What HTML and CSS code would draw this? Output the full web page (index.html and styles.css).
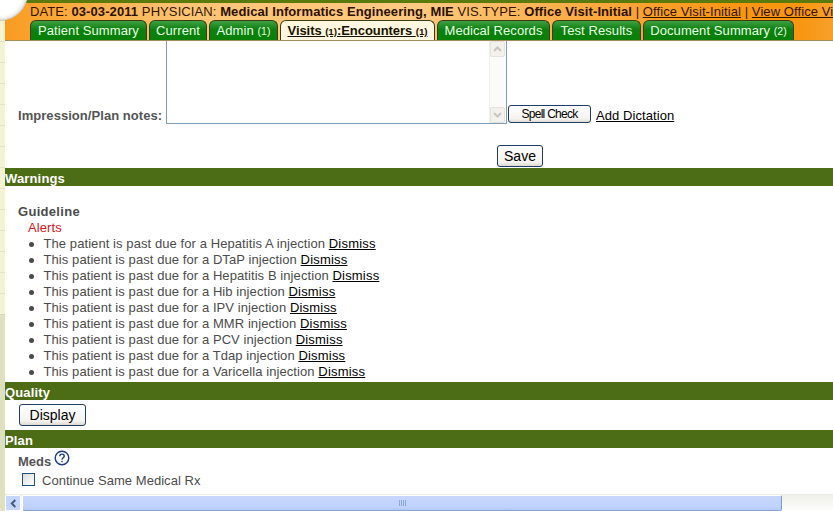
FILE: index.html
```html
<!DOCTYPE html>
<html lang="en">
<head>
<meta charset="utf-8">
<title>Encounter</title>
<link rel="stylesheet" href="styles.css">
</head>
<body>
<div class="app">
  <div class="rail"><div class="rail-lines"></div></div>
  <main class="main">
    <header class="header">
      <div class="visit">DATE: <b>03-03-2011</b> PHYSICIAN: <b>Medical Informatics Engineering, MIE</b> VIS.TYPE: <b>Office Visit-Initial</b> | <a>Office Visit-Initial</a> | <a>View Office Visit</a></div>
      <nav class="tabs">
        <a class="tab t1">Patient Summary</a>
        <a class="tab t2">Current</a>
        <a class="tab t3">Admin <small>(1)</small></a>
        <a class="tab t4 active"><span>Visits <small>(1)</small>:Encounters <small>(1)</small></span></a>
        <a class="tab t5">Medical Records</a>
        <a class="tab t6">Test Results</a>
        <a class="tab t7">Document Summary <small>(2)</small></a>
      </nav>
    </header>
    <section class="notes">
      <label class="notes-label">Impression/Plan notes:</label>
      <div class="textarea">
        <div class="vscroll">
          <span class="vbtn"><svg width="9" height="6" viewBox="0 0 9 6"><path d="M1 5L4.500 1.500L8 5"/></svg></span>
          <span class="vbtn"><svg width="9" height="6" viewBox="0 0 9 6"><path d="M1 1L4.500 4.500L8 1"/></svg></span>
        </div>
      </div>
      <button class="btn spell">Spell Check</button>
      <a class="link dictation">Add Dictation</a>
    </section>
    <div class="save-row"><button class="btn save">Save</button></div>
    <h2 class="bar">Warnings</h2>
    <section class="warnings">
      <h3>Guideline</h3>
      <div class="alerts">Alerts</div>
      <ul>
        <li>The patient is past due for a Hepatitis A injection <a class="link">Dismiss</a></li>
        <li>This patient is past due for a DTaP injection <a class="link">Dismiss</a></li>
        <li>This patient is past due for a Hepatitis B injection <a class="link">Dismiss</a></li>
        <li>This patient is past due for a Hib injection <a class="link">Dismiss</a></li>
        <li>This patient is past due for a IPV injection <a class="link">Dismiss</a></li>
        <li>This patient is past due for a MMR injection <a class="link">Dismiss</a></li>
        <li>This patient is past due for a PCV injection <a class="link">Dismiss</a></li>
        <li>This patient is past due for a Tdap injection <a class="link">Dismiss</a></li>
        <li>This patient is past due for a Varicella injection <a class="link">Dismiss</a></li>
      </ul>
    </section>
    <h2 class="bar">Quality</h2>
    <div class="quality"><button class="btn display">Display</button></div>
    <h2 class="bar">Plan</h2>
    <section class="plan">
      <div class="meds"><b>Meds</b>
        <svg class="help" width="16" height="16" viewBox="0 0 16 16"><circle cx="8" cy="8" r="6.800"/><path d="M5.800 6.300C5.800 3.400 10.300 3.500 10.300 6.100C10.300 7.800 8 7.800 8 9.700M8 10.800V12.300"/></svg>
      </div>
      <label class="check"><span class="box"></span>Continue Same Medical Rx</label>
    </section>
    <div class="hscroll">
      <span class="hbtn"><svg width="7" height="9" viewBox="0 0 7 9"><path d="M5.300 1L1.800 4.500L5.300 8"/></svg></span>
      <span class="thumb"><i></i><i></i><i></i><i></i></span>
    </div>
  </main>
  <div class="orb"></div>
</div>
</body>
</html>
```

FILE: styles.css
```css
* { box-sizing: border-box; }
body { margin: 0; background: #fff; font: 13px/16px "Liberation Sans", Arial, sans-serif; color: #4c4c4c; }
.app { position: relative; display: flex; width: 833px; height: 511px; overflow: hidden; }
.rail { width: 5px; flex: none; background: #dfe0bd; }
.rail-lines { height: 315px; background: repeating-linear-gradient(#f5f4d2 0 20px, #e4e3c4 20px 21px); border-bottom: 1px solid #d6d6b4; }
.orb { position: absolute; left: -28px; top: -35px; width: 56px; height: 56px; border-radius: 50%; background: radial-gradient(closest-side, #fff 80%, #ecebe8 93%, #c4bfae 100%); }
.main { width: 828px; flex: none; display: flex; flex-direction: column; white-space: nowrap; }

.header { height: 41px; flex: none; border-top: 3px solid #5b7a0d; border-bottom: 1px solid #a58d5c; background: linear-gradient(90deg, #f99c20 0, #fdc474 22%, #fdc880 50%, #fba83c 72%, #f8960f 88%, #f8960f 96%, #f6a02c 100%); }
.visit { height: 17px; padding-left: 25px; line-height: 17px; color: #321400; overflow: hidden; letter-spacing: 0.090px; }
.visit b { color: #2b1100; }
.visit a { text-decoration: underline; }
.tabs { display: flex; gap: 2px; padding-left: 25px; }
.tab { height: 20px; flex: none; border: 1px solid #3c3c10; border-bottom: 0; border-radius: 6px 6px 0 0; background: linear-gradient(#3ea043, #0d800f 45%, #088008); color: #e6ffe2; text-align: center; line-height: 19px; letter-spacing: 0.080px; }
.tab small { font-size: 10.500px; }
.t1 { width: 117px; }
.t2 { width: 58px; }
.t3 { width: 69px; }
.t4 { width: 155px; }
.t5 { width: 113px; }
.t6 { width: 89px; }
.t7 { width: 151px; }
.active { background: #fff7e0; color: #171400; font-weight: bold; letter-spacing: -0.060px; }
.active small { font-size: 9.800px; }
.active span { text-decoration: underline; }

.notes { height: 83px; flex: none; display: flex; align-items: flex-end; padding-left: 13px; }
.notes-label { width: 148px; font-weight: bold; color: #555; letter-spacing: 0.050px; }
.textarea { width: 341px; height: 83px; display: flex; justify-content: flex-end; border: 1px solid #7f9db9; border-top: 0; }
.vscroll { width: 17px; display: flex; flex-direction: column; justify-content: space-between; background: #fbfbf9; border-left: 1px solid #f0efe9; }
.vbtn { width: 15px; height: 16px; display: flex; align-items: center; justify-content: center; border: 1px solid #e3e3dc; border-radius: 2px; background: #f2f1ec; }
.vbtn path { fill: none; stroke: #c6c6bd; stroke-width: 2; }
.btn { display: block; padding: 0; border: 1px solid #1f3d66; border-radius: 3px; background: linear-gradient(#fff, #f4f3ef 80%, #dedad0); color: #000; font-family: "Liberation Sans", Arial, sans-serif; text-align: center; }
.spell { width: 83px; height: 18px; margin: 0 5px 1px 1px; font-size: 12px; line-height: 15px; letter-spacing: -0.720px; }
.link { color: #000; text-decoration: underline; }
.dictation { letter-spacing: 0.070px; }
.save-row { height: 44px; flex: none; padding: 21px 0 0 492px; }
.save { width: 46px; height: 22px; font-size: 14px; line-height: 18px; }

.bar { height: 18px; flex: none; margin: 0; background: #4c6c15; color: #fff; font-size: 13px; line-height: 21px; letter-spacing: 0.150px; }
.warnings { height: 196px; flex: none; padding: 18px 0 0 13px; }
.warnings h3 { margin: 0; font-size: 13px; line-height: 16px; letter-spacing: 0.300px; }
.alerts { padding-left: 10px; color: #d2171d; letter-spacing: 0.100px; }
ul { margin: 0; padding: 0 0 0 10px; list-style: none; }
li { display: flex; align-items: center; white-space: pre; letter-spacing: 0.080px; }
li .link { letter-spacing: 0.200px; }
li::before { content: ""; width: 5px; height: 5px; margin: 1px 9.500px 0 1px; border-radius: 50%; background: #4a4a4a; }
.quality { height: 30px; flex: none; padding: 4px 0 0 14px; }
.display { width: 67px; height: 22px; font-size: 14px; line-height: 18px; }
.plan { height: 46px; flex: none; padding: 2px 0 0 13px; }
.meds { height: 20px; display: flex; gap: 3px; color: #555; line-height: 23px; }
.help { fill: none; stroke: #1d3c7c; stroke-width: 1.400; }
.check { display: flex; align-items: center; height: 21px; letter-spacing: 0.040px; }
.box { width: 13px; height: 13px; margin: -2px 7px 0 4px; border: 1px solid #1d5180; background: linear-gradient(135deg, #dcdcd7, #fff); }
.hscroll { height: 17px; flex: none; display: flex; align-items: flex-start; gap: 1px; border-top: 1px solid #eeede5; background: linear-gradient(#f0f0ea, #fefefb); }
.hbtn { width: 16px; height: 16px; display: flex; align-items: center; justify-content: center; border: 1px solid #fff; border-radius: 2px; background: #c6d5fb; }
.hbtn path { fill: none; stroke: #435b86; stroke-width: 2; }
.thumb { width: 760px; height: 16px; display: flex; align-items: center; justify-content: center; gap: 1px; border: 1px solid #fff; border-right-color: #7c9bcd; border-bottom-color: #8aa5d2; border-radius: 2px; background: linear-gradient(#c8d6fb, #bfd3fd 80%, #b4c8f4); }
.thumb i { width: 1px; height: 6px; background: #8ca6df; }
```
